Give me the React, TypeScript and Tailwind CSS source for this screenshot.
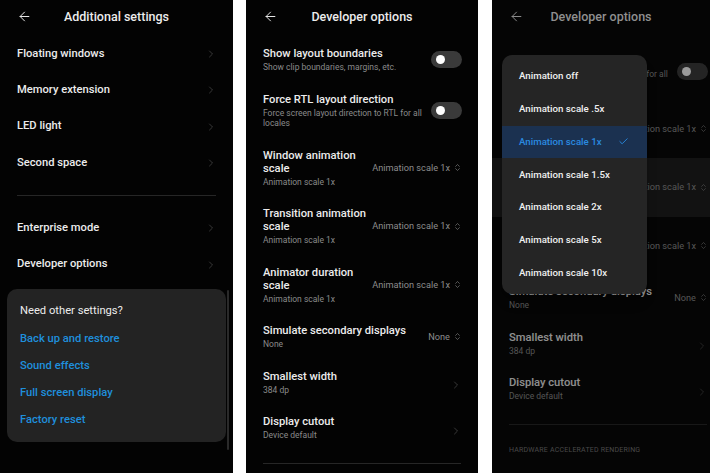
import React from "react";
import { ArrowLeft, ChevronRight, ChevronsUpDown, Check } from "lucide-react";

const font = { fontFamily: "Roboto, 'Noto Sans', sans-serif" };

function Header({ title, dim = false }: { title: string; dim?: boolean }) {
  return (
    <div className="relative h-[37px] flex items-center justify-center shrink-0">
      <ArrowLeft
        className={`absolute left-[17px] top-[9px] ${dim ? "text-[#8a8a8a]" : "text-[#e6e6e6]"}`}
        size={15}
        strokeWidth={1.6}
      />
      <span className={`text-[12.5px] font-medium ${dim ? "text-[#8f8f8f]" : "text-[#ececec]"} -mt-[3px]`}>{title}</span>
    </div>
  );
}

function SimpleRow({ label }: { label: string }) {
  return (
    <div className="h-[36.3px] flex items-center justify-between pl-[17px] pr-[16px]">
      <span className="text-[11.2px] font-medium text-[#ececec]">{label}</span>
      <ChevronRight size={12} strokeWidth={1.5} className="text-[#4a4a4a]" />
    </div>
  );
}

function Toggle() {
  return (
    <div className="w-[31px] h-[17px] rounded-full bg-[#3a3a3a] flex items-center pl-[5px] shrink-0">
      <div className="w-[9px] h-[9px] rounded-full bg-white" />
    </div>
  );
}

type DevRow = {
  title: string[];
  sub: string[];
  right: "toggle" | "chevron" | string;
  highlight?: boolean;
};

const devRows: DevRow[] = [
  { title: ["Show layout boundaries"], sub: ["Show clip boundaries, margins, etc."], right: "toggle" },
  { title: ["Force RTL layout direction"], sub: ["Force screen layout direction to RTL for all", "locales"], right: "toggle" },
  { title: ["Window animation", "scale"], sub: ["Animation scale 1x"], right: "Animation scale 1x" },
  { title: ["Transition animation", "scale"], sub: ["Animation scale 1x"], right: "Animation scale 1x", highlight: true },
  { title: ["Animator duration", "scale"], sub: ["Animation scale 1x"], right: "Animation scale 1x" },
  { title: ["Simulate secondary displays"], sub: ["None"], right: "None" },
  { title: ["Smallest width"], sub: ["384 dp"], right: "chevron" },
  { title: ["Display cutout"], sub: ["Device default"], right: "chevron" },
];

function DevList({ dim = false }: { dim?: boolean }) {
  return (
    <div className="w-[232px]">
      {devRows.map((r, i) => (
        <div
          key={i}
          className={`flex items-center justify-between pl-[17px] pr-[16px] py-[10px] ${
            dim && r.highlight ? "bg-[#1b1b1b]" : ""
          }`}
        >
          <div className="flex flex-col">
            {r.title.map((t, j) => (
              <span key={j} className="text-[11.2px] leading-[13px] font-medium text-[#ececec] whitespace-nowrap">
                {t}
              </span>
            ))}
            <div className="mt-[2px] flex flex-col">
              {r.sub.map((s, j) => (
                <span key={j} className="text-[8.5px] leading-[10.5px] text-[#8a8a8a] whitespace-nowrap">
                  {s}
                </span>
              ))}
            </div>
          </div>
          {r.right === "toggle" ? (
            <Toggle />
          ) : r.right === "chevron" ? (
            <ChevronRight size={12} strokeWidth={1.5} className="text-[#4a4a4a] mt-[6px]" />
          ) : (
            <div className="flex items-center gap-[3px] text-[#8c8c8c] shrink-0">
              <span className="text-[9.2px] whitespace-nowrap">{r.right}</span>
              <ChevronsUpDown size={9} strokeWidth={1.6} />
            </div>
          )}
        </div>
      ))}
      <div className="mx-[17px] mt-[12px] h-px bg-[#262626]" />
      <div className="pl-[17px] pt-[20px] text-[7px] tracking-[0.2px] text-[#777]">HARDWARE ACCELERATED RENDERING</div>
    </div>
  );
}

const menuItems = [
  "Animation off",
  "Animation scale .5x",
  "Animation scale 1x",
  "Animation scale 1.5x",
  "Animation scale 2x",
  "Animation scale 5x",
  "Animation scale 10x",
];

export default function App() {
  return (
    <div className="w-[710px] h-[473px] bg-white flex overflow-hidden" style={font}>
      {/* Panel 1 */}
      <div className="w-[233px] h-full bg-[#030303] flex flex-col relative overflow-hidden">
        <Header title="Additional settings" />
        <div className="-mt-[1px]">
          <SimpleRow label="Floating windows" />
          <SimpleRow label="Memory extension" />
          <SimpleRow label="LED light" />
          <SimpleRow label="Second space" />
        </div>
        <div className="h-[29px] flex items-center px-[17px]">
          <div className="w-full h-px bg-[#262626]" />
        </div>
        <SimpleRow label="Enterprise mode" />
        <SimpleRow label="Developer options" />
        <div className="mt-[6px] mx-[7px] w-[219px] rounded-[10px] bg-[#232323] pt-[14px] pb-[8px] pl-[13px]">
          <div className="h-[18px] flex items-center text-[11.2px] text-[#ececec]">Need other settings?</div>
          <div className="mt-[5px]">
            {["Back up and restore", "Sound effects", "Full screen display", "Factory reset"].map((l) => (
              <div key={l} className="h-[27px] flex items-center text-[11.2px] font-medium text-[#1f8fdc]">
                {l}
              </div>
            ))}
          </div>
        </div>
        <div className="absolute left-[227px] top-[290px] w-[2px] h-[160px] rounded-full bg-[#2a2a2a]" />
      </div>

      <div className="w-[13px] h-full bg-white" />

      {/* Panel 2 */}
      <div className="w-[232px] h-full bg-[#030303] flex flex-col overflow-hidden">
        <Header title="Developer options" />
        <DevList />
      </div>

      <div className="w-[14px] h-full bg-white" />

      {/* Panel 3 */}
      <div className="w-[218px] h-full bg-[#050505] flex flex-col overflow-hidden relative">
        <Header title="Developer options" dim />
        <div className="flex-1 overflow-hidden opacity-60">
          <div className="-mt-[39px]">
            <DevList dim />
          </div>
        </div>
        <div className="absolute left-[10px] top-[55px] w-[145px] rounded-[10px] bg-[#252525] pt-[5px] pb-[4px] overflow-hidden shadow-lg">
          {menuItems.map((m, i) => {
            const sel = i === 2;
            return (
              <div
                key={m}
                className={`h-[32.8px] flex items-center justify-between pl-[17px] pr-[18px] ${
                  sel ? "bg-[#1b3150]" : ""
                }`}
              >
                <span className={`text-[9.7px] font-medium ${sel ? "text-[#2a8be0]" : "text-[#f0f0f0]"}`}>{m}</span>
                {sel && <Check size={11} strokeWidth={2} className="text-[#2a8be0]" />}
              </div>
            );
          })}
        </div>
      </div>
    </div>
  );
}
